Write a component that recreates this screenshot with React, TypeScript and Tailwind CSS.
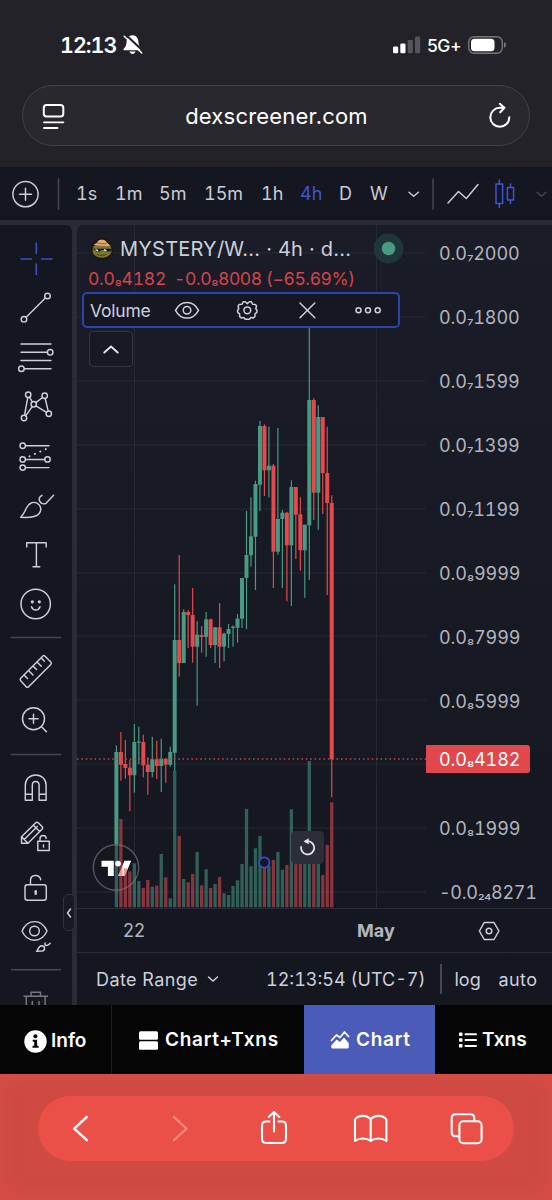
import type { ReactNode } from "react";

type Candle = [up: 0 | 1, high: number, bodyTop: number, bodyBottom: number, low: number, volumeTop: number];

const CANDLES: Candle[] = [
  [1, 745.3, 752, 844.3, 844.3, 844.3],
  [0, 732, 752, 764.7, 780.7, 819],
  [0, 740, 764, 768, 778.7, 868.3],
  [0, 760, 767.7, 775.3, 811.3, 871.3],
  [1, 724, 742, 775.3, 792.7, 863.3],
  [1, 726.7, 741.5, 742.7, 764.3, 881],
  [0, 734.7, 742, 765.3, 777.3, 888],
  [0, 757.3, 764.7, 772, 794.7, 880],
  [1, 736.7, 759.3, 772, 777.3, 886.7],
  [0, 740.7, 759.3, 766, 779, 885.7],
  [1, 738.7, 758.7, 766, 792, 854],
  [0, 758.7, 758.7, 764.7, 782.7, 877.3],
  [1, 746.7, 752, 764.7, 766.7, 898.3],
  [1, 584.3, 640, 752.7, 770.7, 770.7],
  [0, 555, 640, 663, 676.7, 836],
  [1, 609.3, 612, 663, 663, 879],
  [0, 610, 612, 615, 648, 882.3],
  [0, 588, 615, 646.7, 662.7, 874],
  [1, 621.3, 634.7, 646.7, 705.7, 852],
  [0, 626, 635, 637, 652.7, 885.3],
  [1, 612, 619.3, 637, 656.7, 869.3],
  [0, 618.7, 619.3, 645, 648, 888],
  [1, 627.3, 627.3, 645, 663, 884],
  [0, 603, 627.3, 646.7, 668, 877],
  [1, 632.7, 633.7, 646.7, 661.3, 893.3],
  [1, 624, 629, 634, 648, 895],
  [1, 625.3, 626.7, 628, 646.7, 886],
  [1, 614, 618.7, 627.7, 642.7, 880.3],
  [1, 578, 578, 618.7, 628, 864],
  [1, 511, 555, 578, 629, 809],
  [1, 497.3, 536.3, 555.3, 566.7, 866.3],
  [1, 480.7, 484, 536.7, 590, 848.3],
  [1, 421, 426, 484.7, 511, 836],
  [0, 424.3, 426, 470.3, 496, 864],
  [1, 426.7, 465.7, 470.3, 497.3, 866],
  [0, 464, 465.7, 551.7, 588, 860],
  [1, 428, 519, 551.7, 554.7, 852],
  [1, 510, 512.7, 519, 588, 869.7],
  [0, 511.7, 512.7, 545.3, 601.3, 865],
  [1, 480.3, 487, 545.3, 606, 809.3],
  [0, 487, 487, 514.7, 559, 862],
  [0, 497.3, 514.3, 550.3, 570.7, 862],
  [1, 524.7, 524.7, 550.3, 597.7, 863],
  [1, 328, 400, 525.3, 580, 761],
  [0, 398.3, 400, 492.7, 520, 862],
  [1, 405.3, 417, 492.7, 529.7, 864],
  [0, 417, 417, 473, 514, 875],
  [0, 426.7, 473, 503, 595, 845],
  [0, 495.3, 503, 759.3, 797.3, 802.3],
];

const GRID_ROWS = [253, 317, 381, 445, 509, 573, 636, 700, 764, 828, 892];

type PriceParts = [head: string, zeros: string, digits: string];

const PRICES: PriceParts[] = [
  ["0.0", "₇", "2000"],
  ["0.0", "₇", "1800"],
  ["0.0", "₇", "1599"],
  ["0.0", "₇", "1399"],
  ["0.0", "₇", "1199"],
  ["0.0", "₈", "9999"],
  ["0.0", "₈", "7999"],
  ["0.0", "₈", "5999"],
  ["", "", ""],
  ["0.0", "₈", "1999"],
  ["-0.0", "₂₄", "8271"],
];

function Price({ parts: [head, zeros, digits] }: { parts: PriceParts }) {
  return (
    <span className="whitespace-nowrap">
      {head}
      <span className="align-[1px] text-[16px] leading-none">{zeros}</span>
      {digits}
    </span>
  );
}

function Tool({ y, h, children, w = 1.45, stroke = "#cdd0da" }: { y: number; h: number; children: ReactNode; w?: number; stroke?: string }) {
  return (
    <svg width="72" height={h} viewBox={`0 ${y} 72 ${h}`} fill="none" stroke={stroke} strokeWidth={w} strokeLinecap="round" strokeLinejoin="round" className="block shrink-0">
      {children}
    </svg>
  );
}

function StatusBar() {
  return (
    <div className="flex h-[85px] pt-[31px] pl-[60px]">
      <span className="w-[62px] text-[21.500px] leading-7 font-semibold tracking-[-1px] text-white tabular-nums">12:13</span>
      <svg width="22" height="28" viewBox="122 31 22 28" className="-mt-px">
        <path d="M132.5 36.2c-4.2 0-5.8 3.3-6 7.2-.1 3.2-1.2 4.6-2.8 6.3-.8 1 0 1.600.8 1.600h16c.8 0 1.600-.6.8-1.600-1.600-1.700-2.700-3.100-2.800-6.300-.2-3.900-1.800-7.200-6-7.200zM129.500 52.600h6c-.5 1.500-1.600 2.300-3 2.300s-2.500-.8-3-2.300z" fill="#fff" />
        <path d="M125 35l18.500 17.500" stroke="#232228" strokeWidth="2" />
        <path d="M124.200 37.200L141.800 54" stroke="#fff" strokeWidth="1.500" strokeLinecap="round" />
      </svg>
      <svg width="30" height="28" viewBox="392 31 30 28" className="ml-[248px]">
        <rect x="393" y="46.500" width="5.200" height="6.700" rx="1.300" fill="#fff" />
        <rect x="400.300" y="43.500" width="5.200" height="9.700" rx="1.300" fill="#fff" />
        <rect x="407.700" y="40" width="5.200" height="13.200" rx="1.300" fill="#55545a" />
        <rect x="415" y="36.500" width="5.200" height="16.700" rx="1.300" fill="#55545a" />
      </svg>
      <span className="ml-[5px] w-[40px] text-[17.500px] leading-[30px] font-medium tracking-[-0.5px] text-white">5G+</span>
      <svg width="40" height="28" viewBox="467 31 40 28">
        <rect x="468.700" y="36.700" width="33.600" height="16.600" rx="5.500" fill="none" stroke="#77767c" strokeWidth="1.400" />
        <rect x="471" y="38.800" width="23.500" height="12.400" rx="3.500" fill="#fff" />
        <path d="M504 42.300c1.500.5 2 1.500 2 2.700s-.5 2.200-2 2.700z" fill="#77767c" />
      </svg>
    </div>
  );
}

function AddressBar() {
  return (
    <div className="mx-[22px] flex h-[61px] items-center justify-between rounded-full border-[1.500px] border-[#424149] bg-[#29282f] pr-[17px] pl-[19px]">
      <svg width="24" height="30" viewBox="42 100 24 30" fill="none" stroke="#fff" strokeWidth="2" strokeLinecap="round">
        <rect x="43.800" y="104" width="19.500" height="11.500" rx="2.800" />
        <path d="M44 121.300h19.400M44 127h13.500" strokeWidth="1.800" />
      </svg>
      <span className="-ml-px text-[22px] leading-[30px] tracking-[0.2px] text-white">dexscreener.com</span>
      <svg width="24" height="30" viewBox="488 100 24 30" fill="none" stroke="#fff" strokeWidth="2" strokeLinecap="round" strokeLinejoin="round">
        <path d="M509.300 116.300a9.500 9.500 0 1 1-9.500-9.500h4.200M499.800 102.800l4.600 4-4.200 4.500" />
      </svg>
    </div>
  );
}

function Toolbar() {
  return (
    <div className="flex h-[53px] items-center overflow-hidden bg-[#141620] text-[18px] leading-[53px] whitespace-nowrap text-[#c9ccd6] tabular-nums">
      <svg width="76" height="53" viewBox="0 167 76 53" fill="none" stroke="#c9ccd6" strokeWidth="1.500" strokeLinecap="round" className="shrink-0">
        <circle cx="25.500" cy="194.200" r="12.600" />
        <path d="M19.500 194.200h12M25.500 188.200v12" />
        <path d="M58.500 179v30" stroke="#454754" />
      </svg>
      <span className="w-[39px] shrink-0">1s</span>
      <span className="w-[44px] shrink-0">1m</span>
      <span className="w-[45px] shrink-0">5m</span>
      <span className="w-[57px] shrink-0">15m</span>
      <span className="w-[39px] shrink-0">1h</span>
      <span className="w-[39px] shrink-0 text-[#4055d4]">4h</span>
      <span className="w-[31px] shrink-0">D</span>
      <span className="w-[30px] shrink-0">W</span>
      <svg width="152" height="53" viewBox="400 167 152 53" fill="none" stroke="#c9ccd6" strokeWidth="1.500" strokeLinecap="round" strokeLinejoin="round" className="shrink-0">
        <path d="M409 192.300l4.700 4 4.700-4" />
        <path d="M433 179v30" stroke="#454754" />
        <path d="M448 203l10.500-11.500 7.800 7L478 184.500" />
        <g stroke="#4055d4">
          <path d="M499.300 180v4M499.300 203.500v4M510.500 184v3.500M510.500 200v3.500" />
          <rect x="496" y="184" width="6.600" height="19.500" />
          <rect x="507.400" y="187.500" width="6.200" height="12.500" />
        </g>
        <path d="M537 192.300l4.500 4 4.500-4" stroke="#454754" />
      </svg>
    </div>
  );
}

function Sidebar() {
  return (
    <div className="flex w-[72px] shrink-0 flex-col overflow-hidden rounded-tr-[6px] bg-[#141620]">
      <Tool y={225} h={58} stroke="#3f50c0" w={1.600}>
        <path d="M36.300 243v10.500M36.300 264v10.500M21 259h10.500M41.500 259H52" />
      </Tool>
      <Tool y={283} h={49}>
        <circle cx="47.500" cy="296" r="2.800" /><circle cx="24" cy="319.300" r="2.800" />
        <path d="M45.400 298.100L26.100 317.200" />
      </Tool>
      <Tool y={332} h={49}>
        <path d="M21 344h30M21 352.300h26.300M21 360.500h30M24.300 368.700H51" />
        <circle cx="50.200" cy="352.300" r="2.800" /><circle cx="21.400" cy="368.700" r="2.800" />
      </Tool>
      <Tool y={381} h={50}>
        <circle cx="28.200" cy="394.700" r="2.700" /><circle cx="44.700" cy="395.800" r="2.700" /><circle cx="33.700" cy="404.300" r="2.700" /><circle cx="24" cy="418" r="2.700" /><circle cx="48.800" cy="413.800" r="2.700" />
        <path d="M27.800 397.400L24.500 415.300M29.500 397.100l2.800 4.900M42.600 397.500l-6.800 5.100M45.200 398.500l3 12.600M35.900 405.800l10.600 6.500M32.200 406.600l-6.600 9.200" />
      </Tool>
      <Tool y={431} h={50}>
        <circle cx="22.700" cy="445.700" r="2.700" /><circle cx="22.700" cy="459.400" r="2.700" /><circle cx="22.700" cy="467.600" r="2.700" /><circle cx="47.500" cy="459.400" r="2.700" />
        <path d="M25.600 445.700H49M25.600 459.400h19M25.600 467.600H49" />
        <path d="M29.500 456.300L47 448.600" strokeDasharray=".1 5.800" strokeWidth="2" />
      </Tool>
      <Tool y={481} h={49}>
        <path d="M20.600 517.300c3-2.300 3.800-5 5.800-9.300 2.200-4.700 6.800-7 10.900-4.700 4 2.200 4.500 7.200 1.700 10.500-2.700 3.200-9 4-18.400 3.500z" />
        <path d="M42 495.300c-2.700 1.300-3.500 4-2.200 6 1.300 2.300 4 3.300 6.200 2l7.600-8" />
      </Tool>
      <Tool y={530} h={49}>
        <path d="M26.700 547v-4.200h19.500V547M36.400 542.800v23.900M33 566.700h6.800" />
      </Tool>
      <Tool y={579} h={50}>
        <circle cx="35.700" cy="604" r="14.700" />
        <circle cx="32.300" cy="601.800" r=".9" fill="#cdd0da" /><circle cx="39.300" cy="601.800" r=".9" fill="#cdd0da" />
        <path d="M31.500 606.800c1.300 4.300 7.200 4.300 8.500 0" />
      </Tool>
      <Tool y={629} h={17} stroke="#454754"><path d="M11.500 637.500h49" /></Tool>
      <Tool y={646} h={49}>
        <path d="M44.800 656l6 6c.8.8.8 1.600 0 2.400L28.600 686.700c-.8.8-1.600.8-2.400 0l-5.500-6c-.8-.8-.8-1.600 0-2.400L42.900 656c.7-.7 1.200-.7 1.900 0zM24.500 675.500l3 3M29 671l4 4M33.500 666.500l3 3M37.500 662.500l3.800 3.800M41.500 658.300l2.800 2.800" />
      </Tool>
      <Tool y={695} h={51}>
        <circle cx="33.500" cy="718.800" r="11" /><path d="M41.500 726.800l5 5M29 718.800h9M33.500 714.300v9" />
      </Tool>
      <Tool y={746} h={17} stroke="#454754"><path d="M11.500 754.500h49" /></Tool>
      <Tool y={763} h={49}>
        <path d="M25.300 800.200v-15c0-6 4.600-10.200 10.400-10.200s10.400 4.200 10.400 10.200v15h-7v-14.800c0-2.500-1.300-3.900-3.400-3.900s-3.400 1.400-3.400 3.900v14.800zM25.300 794.300h7M39.100 794.300h7" />
      </Tool>
      <Tool y={812} h={50}>
        <path d="M21.500 843.300v-6.500l14-13.800c1-1 2-1 3 0l3.500 3.500c1 1 1 1.800 0 2.800l-14 14zM21.500 836.800l6.500 6.500M24.300 839.500l13-13M33.300 825.200l6.300 6.300" />
        <path d="M37.800 841.300h11.500v9.200H37.800zM40 841.300V839c0-4.500 5.700-4.500 6.200-.6M43.500 845v2" />
      </Tool>
      <Tool y={862} h={50}>
        <rect x="25" y="884.700" width="21.300" height="15.600" rx="2.500" /><path d="M30.500 884.500v-4c0-6.300 9-6.800 10.200-.8" /><path d="M35.700 891.200v2.500" strokeWidth="2.400" />
      </Tool>
      <Tool y={912} h={49}>
        <path d="M22 931c5.500-12.500 19.500-12.500 25 0-5.500 12.300-19.500 12.300-25 0z" /><circle cx="34.500" cy="931" r="4.800" />
        <path d="M36.500 951.300c2-1.300 1.700-5.500 5.200-5.600 3.800 0 3.800 5 .2 5.400zM45 943c-.5 3.800 3 2.800 5.200.3" />
      </Tool>
      <Tool y={961} h={17} stroke="#454754"><path d="M11.500 969.700h49" /></Tool>
      <Tool y={978} h={27} stroke="#757883">
        <path d="M24 996.200h23.500M26.300 996.200V1010h18.800v-13.800M31 996.200v-4h9.500v4M32.300 1001.500v8M39 1001.500v8" />
      </Tool>
    </div>
  );
}

function PriceChart() {
  return (
    <svg width="349" height="683" viewBox="77 225 349 683" className="block">
      <g stroke="#262833" strokeWidth="1.100">
        {GRID_ROWS.map((y) => <path key={y} d={`M77 ${y}H426`} />)}
        <path d="M134.500 225V908M376.500 225V908" />
      </g>
      <circle cx="116" cy="867.500" r="22.700" fill="#141620" stroke="#53555f" strokeWidth="1.400" />
      <g fill="#fff">
        <path d="M101.500 860.700h12.300V876h-5.900v-9.300h-6.400z" />
        <path d="M124.500 860.700h6.700L124.800 876h-6.700z" />
      </g>
      {CANDLES.map(([up, , , , , top], i) => (
        <rect key={i} x={116.400 + i * 4.486 - 1.650} y={top} width="3.300" height={907.300 - top} fill={up ? "#489a83" : "#e04c55"} fillOpacity={0.560} />
      ))}
      <circle cx="118" cy="863.600" r="2.900" fill="#fff" />
      {CANDLES.map(([up, high, top, bottom, low], i) => {
        const x = 116.400 + i * 4.486;
        return (
          <g key={i} fill={up ? "#489a83" : "#e5484d"}>
            <rect x={x - 0.600} y={high} width="1.200" height={low - high} />
            <rect x={x - 2} y={top} width="4" height={Math.max(bottom - top, 1.200)} />
          </g>
        );
      })}
      <path d="M77 759H426" stroke="#c9444d" strokeWidth="1.500" strokeDasharray="1.500 2.900" />
      <circle cx="264.300" cy="862.500" r="5.200" fill="#141620" stroke="#3a4dd0" strokeWidth="1.700" />
      <rect x="291" y="831" width="33" height="33" rx="4.500" fill="#2c2d39" />
      <path d="M301.200 846.300a6.600 6.600 0 1 0 6.500-5.100h-2.500" fill="none" stroke="#e2e4eb" strokeWidth="1.800" />
      <path d="M303.500 841.400l5.200-3.200v6z" fill="#e2e4eb" />
    </svg>
  );
}

function Legend() {
  return (
    <div className="absolute top-0 left-0 w-[349px] whitespace-nowrap text-[#cdd0da]">
      <div className="flex h-[41px] items-center pt-[6px] pl-[12px]">
        <svg width="26" height="26" viewBox="89 235 26 26">
          <circle cx="102" cy="248" r="11" fill="#1b170d" />
          <path d="M92.500 249c0-5 4-6.500 9.500-6.500s9.500 1.500 9.500 6.500-4 7.700-9.500 7.700-9.500-2.700-9.500-7.700z" fill="#7d7630" />
          <path d="M93.800 243.800c2-1.800 3.300-1.600 4.200-3.600 1-1.800 6.700-1.800 7.800 0 1 2 3 2.300 4.700 4.600-4 .7-11.700.2-16.700-1z" fill="#e6a873" />
          <path d="M97 241.800c3 1 6.500 1.300 9.500.9" stroke="#a4493b" fill="none" />
          <path d="M91.500 247.800h20v1.200c-1.500 2-5 2-6.600 0h-3.500c-1.800 2.400-5.600 2-7-.3z" fill="#111214" />
          <path d="M95.500 248.600l2.500 1M104 248.600l2.500 1" stroke="#f0f0ea" strokeWidth="1.300" />
          <path d="M97 253.700c3 1 7 1 9.500-.4" stroke="#4a4517" fill="none" />
        </svg>
        <span className="ml-[5px] w-[254px] text-[20px] leading-[28px] tracking-[0.22px]">MYSTERY/W... · 4h · d...</span>
        <svg width="32" height="32" viewBox="0 0 32 32">
          <circle cx="14.500" cy="15.500" r="15" fill="#20363b" /><circle cx="14.500" cy="15.500" r="6.800" fill="#489a83" />
        </svg>
      </div>
      <div className="flex h-[26px] items-center pt-px pl-[11px] text-[17.500px] text-[#d8434c] tabular-nums">
        <span className="w-[86px] tracking-[-0.25px]"><Price parts={["0.0", "₈", "4182"]} /></span>
        <span className="tracking-[-0.4px]"><Price parts={["-0.0", "₈", "8008 (−65.69%)"]} /></span>
      </div>
      <div className="ml-[5px] flex h-[36px] w-[318px] items-center rounded-[5px] border-2 border-[#2d43ae] bg-[#151722]">
        <span className="w-[78px] pt-px pl-[6px] text-[17.500px] leading-8 tracking-[-0.2px]">Volume</span>
        <svg width="236" height="32" viewBox="162 294 236 32" fill="none" stroke="#cdd0da" strokeWidth="1.500" strokeLinecap="round">
          <path d="M175.500 310.300c5.500-10.400 17.500-10.400 23 0-5.500 10.400-17.500 10.400-23 0z" /><circle cx="187" cy="310.300" r="3.800" />
          <circle cx="247.300" cy="310.300" r="3.400" />
          <path d="M243.200 301.800h2l2.100 1.800 2.100-1.800h2l1.200 2.400 2.800.2 1.200 1.700-.8 2.400 1.200 2-.1 1.800-1.900 1.500-.1 2.800-1.600 1.300-2.500-.4-1.400 1.700h-4.200l-1.400-1.700-2.500.4-1.600-1.300-.1-2.800-1.900-1.500-.1-1.800 1.200-2-.8-2.400 1.200-1.700 2.800-.2z" strokeLinejoin="round" />
          <path d="M300 303l14.800 14.800M314.800 303L300 317.800" />
          <circle cx="358.500" cy="310.300" r="2.500" /><circle cx="368" cy="310.300" r="2.500" /><circle cx="377.700" cy="310.300" r="2.500" />
        </svg>
      </div>
      <div className="mt-[3px] ml-[12px] flex h-[36px] w-[44px] items-center justify-center rounded-[4px] border border-[#333540] bg-[#171923]">
        <svg width="20" height="14" viewBox="0 0 20 14" fill="none" stroke="#e2e4eb" strokeWidth="2" strokeLinecap="round"><path d="M3.300 10.500L10 4.500l6.700 6" /></svg>
      </div>
    </div>
  );
}

function PriceAxis() {
  return (
    <div className="relative w-[126px] overflow-hidden text-[18px] tracking-[-0.1px] text-[#b3b5be] tabular-nums">
      <div className="-mt-[3px] flex flex-col">
        {PRICES.map((parts, i) => (
          <div key={i} className="flex h-[63.900px] shrink-0 items-center pl-[13px] last:tracking-[-0.3px]"><Price parts={parts} /></div>
        ))}
      </div>
      <div className="absolute top-[520px] left-0 flex h-[28px] w-[104px] items-center rounded-r-[3px] bg-[#e0484d] pl-[13px] text-white">
        <Price parts={["0.0", "₈", "4182"]} />
      </div>
    </div>
  );
}

function ChartPanel() {
  return (
    <div className="flex w-[475px] flex-col rounded-tl-[6px] bg-linear-to-b from-[#1a1c27] to-[#141620]">
      <div className="relative flex h-[683px]">
        <PriceChart />
        <Legend />
        <PriceAxis />
      </div>
      <div className="flex h-[44px] items-center border-t border-[#292b36] text-[18px] text-[#b3b5be]">
        <span className="w-[280px] pl-[46px]">22</span>
        <span className="w-[120px] font-bold">May</span>
        <svg width="24" height="24" viewBox="477 918 24 24" fill="none" stroke="#cdd0da" strokeWidth="1.500" strokeLinejoin="round">
          <path d="M484.200 921.500h9.800l4.900 8.500-4.900 8.500h-9.800l-4.800-8.500z" /><circle cx="489" cy="930" r="2.800" />
        </svg>
      </div>
      <div className="flex h-[53px] items-center border-t border-[#2b2d38] text-[18px] whitespace-nowrap text-[#cdd0da]">
        <span className="w-[129px] pl-[19px] tracking-[0.4px]">Date Range</span>
        <svg width="14" height="10" viewBox="0 0 14 10" fill="none" stroke="#cdd0da" strokeWidth="1.500" strokeLinecap="round"><path d="M2.500 3L7 7l4.500-4" /></svg>
        <span className="ml-[46px] w-[174px] tabular-nums">12:13:54 (UTC-7)</span>
        <span className="h-[30px] w-[1.500px] bg-[#454754]" />
        <span className="ml-[13px] w-[44px]">log</span>
        <span className="tracking-[0.4px]">auto</span>
      </div>
    </div>
  );
}

function Tabs() {
  return (
    <nav className="flex h-[69px] bg-[#050505] text-[19px] font-semibold whitespace-nowrap text-white">
      <div className="flex w-[112px] items-center gap-[4px] border-r border-[#1d1d1f] pt-[3px] pl-[24px]">
        <svg width="23" height="23" viewBox="0 0 23 23"><circle cx="11.500" cy="11.500" r="11.200" fill="#fff" /><circle cx="11.400" cy="6.300" r="2" fill="#050505" /><path d="M8.700 9.700h4.400v6h1.500v2H8.500v-2h1.700v-4H8.700z" fill="#050505" /></svg>
        <span>Info</span>
      </div>
      <div className="flex w-[192px] items-center gap-[7px] pt-px pl-[27px]">
        <svg width="19" height="19" viewBox="0 0 19 19" fill="#fff"><rect width="19" height="8.600" y=".2" rx="1.500" /><rect width="19" height="8.600" y="10.200" rx="1.500" /></svg>
        <span className="tracking-[0.7px]">Chart+Txns</span>
      </div>
      <div className="flex w-[131px] items-center gap-[6px] bg-[#4b5bb8] pt-px pl-[26px]">
        <svg width="20" height="20" viewBox="0 0 20 20" fill="none" stroke="#fff" strokeWidth="1.800" strokeLinejoin="round">
          <path d="M1 11l5.500-6 3.500 2.500L14.500 2l4.500 5" />
          <path d="M1.300 15.500L6.500 9.500l3.500 2.500 4-4.500 4.700 5.500v4.200c0 .8-.4 1.200-1.200 1.200h-15c-.8 0-1.200-.4-1.200-1.200z" fill="#fff" stroke="none" />
        </svg>
        <span className="tracking-[0.7px]">Chart</span>
      </div>
      <div className="flex w-[117px] items-center gap-[4px] pt-px pl-[23px]">
        <svg width="20" height="18" viewBox="0 0 20 18" fill="#fff"><rect x="1" y="1.500" width="3.500" height="3.500" rx=".7" /><rect x="1" y="7.300" width="3.500" height="3.500" rx=".7" /><rect x="1" y="13.100" width="3.500" height="3.500" rx=".7" /><rect x="6.500" y="2.300" width="12.500" height="2" rx="1" /><rect x="6.500" y="8.100" width="12.500" height="2" rx="1" /><rect x="6.500" y="13.900" width="12.500" height="2" rx="1" /></svg>
        <span>Txns</span>
      </div>
    </nav>
  );
}

function BrowserBar() {
  return (
    <div className="h-[126px] bg-[#cf4a43] pt-[22px] shadow-[inset_0_0_20px_#d84f48]">
      <div className="mx-[38px] h-[65px] rounded-full bg-[#ea5048]">
        <svg width="476" height="65" viewBox="38 1096 476 65" fill="none" stroke="#fff" strokeWidth="2.100" strokeLinecap="round" strokeLinejoin="round">
          <path d="M86.800 1117l-12.600 11.600 12.600 11.600" strokeWidth="2.500" />
          <path d="M174 1117l12.600 11.600-12.600 11.600" stroke="#f28178" strokeWidth="2.400" />
          <path d="M269.500 1121.500h-3.300c-2.700 0-4.200 1.500-4.200 4.200v13.100c0 2.700 1.500 4.200 4.200 4.200h15.600c2.700 0 4.200-1.500 4.200-4.200v-13.100c0-2.700-1.500-4.200-4.200-4.200h-3.300M274 1131.500V1112M268.700 1117l5.300-5 5.300 5" />
          <path d="M370.700 1119.500c-3.500-4.800-12.200-4.800-15.700 0v21.500c4.500-3.300 11.500-3.300 15.700 0 4.200-3.300 11.200-3.300 15.700 0v-21.500c-3.500-4.800-12.200-4.800-15.700 0zM370.700 1119.500V1141" />
          <path d="M458.500 1136.300h-2.800c-2.700 0-4-1.400-4-4v-14c0-2.700 1.300-4 4-4h14.600c2.700 0 4 1.300 4 4v2.800" />
          <rect x="459.400" y="1121.300" width="22.200" height="22" rx="4" />
        </svg>
      </div>
    </div>
  );
}

export default function App() {
  return (
    <div className="h-[1200px] w-[552px] overflow-hidden bg-[#232228] font-['Inter','Noto_Sans',sans-serif]">
      <header className="h-[167px]">
        <StatusBar />
        <AddressBar />
      </header>
      <Toolbar />
      <main className="relative flex h-[785px] justify-between bg-[#292b36] pt-[5px]">
        <Sidebar />
        <ChartPanel />
        <div className="absolute top-[674px] left-[63px] flex h-[37px] w-[12px] items-center justify-center rounded-[5px] border border-[#30323d] bg-[#171923]">
          <svg width="8" height="12" viewBox="0 0 8 12" className="shrink-0" fill="none" stroke="#cdd0da" strokeWidth="1.500" strokeLinecap="round"><path d="M5.500 2L2.500 6l3 4" /></svg>
        </div>
      </main>
      <Tabs />
      <BrowserBar />
    </div>
  );
}
